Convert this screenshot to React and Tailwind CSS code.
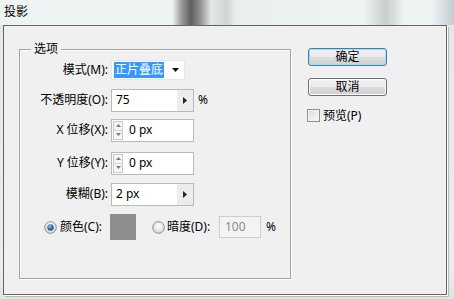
import React from "react";

const Tri = () => (
  <svg width="4" height="7" viewBox="0 0 4 7"><path d="M0 0 L4 3.5 L0 7 Z" fill="#222" /></svg>
);

const Stepper = () => (
  <div className="w-[16px] h-full bg-[#ececec] flex items-center justify-center">
    <Tri />
  </div>
);

const Spinner = () => (
  <div className="ml-[1px] w-[10px] h-[19px] border border-[#c9c9c9] bg-[#f6f6f6] flex flex-col">
    <div className="flex-1 flex items-center justify-center border-b border-[#d6d6d6]">
      <svg width="5" height="3" viewBox="0 0 5 3"><path d="M0 3 L2.5 0 L5 3 Z" fill="#7a7a7a" /></svg>
    </div>
    <div className="flex-1 flex items-center justify-center">
      <svg width="5" height="3" viewBox="0 0 5 3"><path d="M0 0 L2.5 3 L5 0 Z" fill="#7a7a7a" /></svg>
    </div>
  </div>
);

const Radio = ({ on }) => (
  <svg width="13" height="13" viewBox="0 0 13 13">
    <defs>
      <radialGradient id={on ? "rg1" : "rg0"} cx="50%" cy="35%" r="70%">
        <stop offset="0%" stopColor="#ffffff" />
        <stop offset="100%" stopColor="#d4d4d4" />
      </radialGradient>
      <radialGradient id="dot" cx="40%" cy="35%" r="70%">
        <stop offset="0%" stopColor="#8fc3ea" />
        <stop offset="60%" stopColor="#2a6fa6" />
        <stop offset="100%" stopColor="#1c4c78" />
      </radialGradient>
    </defs>
    <circle cx="6.5" cy="6.5" r="5.8" fill={`url(#${on ? "rg1" : "rg0"})`} stroke="#8b8b8b" strokeWidth="1" />
    {on && <circle cx="6.5" cy="6.5" r="3.2" fill="url(#dot)" />}
  </svg>
);

const Row = ({ label, mt, children }) => (
  <div className={`flex items-center h-[22px] ${mt}`}>
    <span className="w-[88px] text-right whitespace-nowrap">{label}</span>
    <div className="ml-[3px] flex items-center h-full">{children}</div>
  </div>
);

export default function App() {
  return (
    <div className="w-[454px] h-[299px] overflow-hidden bg-[linear-gradient(180deg,#e3e7e8_0%,#e9eded_90%,#dfe3e1_100%)] text-[12px] leading-[16px] text-black font-['Noto_Sans','Noto_Sans_CJK_SC',sans-serif]">
      <div className="h-[25px] pl-[4px] pt-[4px] text-[12px] bg-[linear-gradient(90deg,#eef3f4_0%,#eef3f4_38%,#9a9a9a_40%,#5e5e5e_42%,#8e8e8e_44%,#e4e8e8_46.5%,#d2d4d4_50%,#eaeeee_52%,#eef3f4_80%,#c9cdcd_85%,#eef3f4_89%,#eef3f4_95%,#c4ccd2_100%)]">
        投影
      </div>
      <div className="ml-[3px] w-[444px] h-[270px] border border-[#646464] bg-[#f0f0f0] shadow-[1px_1px_0_#ffffff,2px_2px_0_#b9b9b9] flex">
        <fieldset className="ml-[15px] mt-[15px] w-[272px] h-[238px] border border-[#a3a3a3] shadow-[1px_1px_0_#ffffff,inset_1px_1px_0_#ffffff] p-0 m-0">
          <legend className="ml-[11px] px-[3px] leading-[16px]">选项</legend>
          <Row label="模式(M):" mt="mt-[2px]">
            <div className="w-[74px] h-[20px] bg-white border border-[#e6e6e6] flex items-center">
              <span className="ml-[2px] px-[1px] h-[16px] leading-[16px] bg-[#3399ff] text-white">正片叠底</span>
              <svg className="ml-[8px]" width="7" height="4" viewBox="0 0 7 4"><path d="M0 0 L7 0 L3.5 4 Z" fill="#111" /></svg>
            </div>
          </Row>
          <Row label="不透明度(O):" mt="mt-[8px]">
            <div className="w-[83px] h-[23px] bg-white border border-[#b9b9b9] flex items-stretch">
              <span className="flex-1 pl-[4px] flex items-center">75</span>
              <Stepper />
            </div>
            <span className="ml-[4px]">%</span>
          </Row>
          <Row label="X 位移(X):" mt="mt-[8px]">
            <div className="w-[83px] h-[23px] bg-white border border-[#b9b9b9] flex items-center">
              <Spinner />
              <span className="ml-[6px]">0 px</span>
            </div>
          </Row>
          <Row label="Y 位移(Y):" mt="mt-[11px]">
            <div className="w-[83px] h-[23px] bg-white border border-[#b9b9b9] flex items-center">
              <Spinner />
              <span className="ml-[6px]">0 px</span>
            </div>
          </Row>
          <Row label="模糊(B):" mt="mt-[9px]">
            <div className="w-[83px] h-[23px] bg-white border border-[#b9b9b9] flex items-stretch">
              <span className="flex-1 pl-[4px] flex items-center">2 px</span>
              <Stepper />
            </div>
          </Row>
          <div className="mt-[9px] h-[26px] pl-[24px] flex items-center">
            <Radio on />
            <span className="ml-[3px] w-[50px] whitespace-nowrap">颜色(C):</span>
            <div className="w-[26px] h-[26px] bg-[#8d8d8d]" />
            <div className="ml-[16px] flex items-center">
              <Radio />
            </div>
            <span className="ml-[2px] w-[52px] whitespace-nowrap">暗度(D):</span>
            <div className="w-[42px] h-[22px] border border-[#cdcdcd] bg-[#f3f3f3] pl-[5px] flex items-center text-[#8a8a8a]">100</div>
            <span className="ml-[5px]">%</span>
          </div>
        </fieldset>
        <div className="ml-[17px] mt-[22px] flex flex-col">
          <div className="w-[79px] h-[18px] rounded-[3px] border border-[#3c7fb1] shadow-[inset_0_0_0_1px_#a8dcf6] bg-[linear-gradient(180deg,#f2f2f2_0%,#ebebeb_50%,#dddddd_51%,#cfcfcf_100%)] flex items-center justify-center leading-[14px]">
            确定
          </div>
          <div className="mt-[12px] w-[79px] h-[18px] rounded-[3px] border border-[#707070] shadow-[inset_0_0_0_1px_#fbfbfb] bg-[linear-gradient(180deg,#f2f2f2_0%,#ebebeb_50%,#dddddd_51%,#cfcfcf_100%)] flex items-center justify-center leading-[14px]">
            取消
          </div>
          <div className="mt-[12px] -ml-[1px] flex items-center h-[15px]">
            <div className="w-[13px] h-[13px] border border-[#8e8f8f] bg-[linear-gradient(135deg,#dcdcdc,#fafafa)] shadow-[inset_0_0_0_1px_#f4f4f4]" />
            <span className="ml-[3px]">预览(P)</span>
          </div>
        </div>
      </div>
    </div>
  );
}
